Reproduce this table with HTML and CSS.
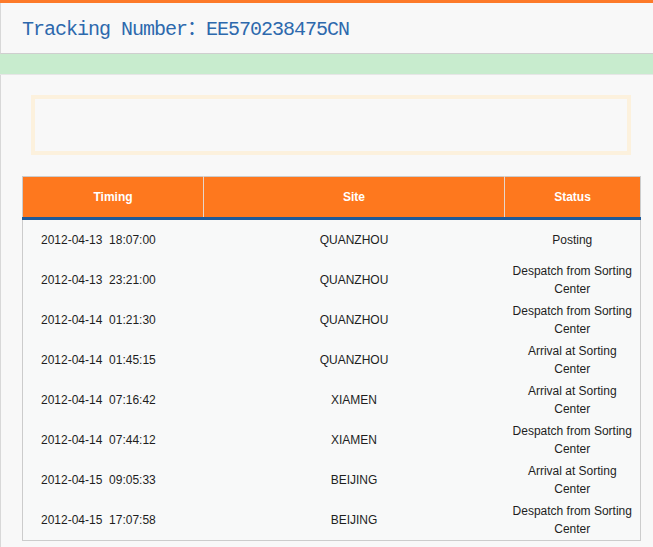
FILE: index.html
```html
<!DOCTYPE html>
<html>
<head>
<meta charset="utf-8">
<link rel="stylesheet" href="styles.css">
</head>
<body>
<div class="topbar"></div>
<div class="header"><h1 class="title">Tracking Number：EE570238475CN</h1></div>
<div class="band"></div>
<div class="main">
  <div class="notice"></div>
  <table class="track">
    <thead>
      <tr><th class="c1">Timing</th><th class="c2">Site</th><th class="c3">Status</th></tr>
    </thead>
    <tbody>
      <tr><td class="time">2012-04-13&nbsp;&nbsp;18:07:00</td><td>QUANZHOU</td><td>Posting</td></tr>
      <tr><td class="time">2012-04-13&nbsp;&nbsp;23:21:00</td><td>QUANZHOU</td><td>Despatch from Sorting Center</td></tr>
      <tr><td class="time">2012-04-14&nbsp;&nbsp;01:21:30</td><td>QUANZHOU</td><td>Despatch from Sorting Center</td></tr>
      <tr><td class="time">2012-04-14&nbsp;&nbsp;01:45:15</td><td>QUANZHOU</td><td>Arrival at Sorting Center</td></tr>
      <tr><td class="time">2012-04-14&nbsp;&nbsp;07:16:42</td><td>XIAMEN</td><td>Arrival at Sorting Center</td></tr>
      <tr><td class="time">2012-04-14&nbsp;&nbsp;07:44:12</td><td>XIAMEN</td><td>Despatch from Sorting Center</td></tr>
      <tr><td class="time">2012-04-15&nbsp;&nbsp;09:05:33</td><td>BEIJING</td><td>Arrival at Sorting Center</td></tr>
      <tr><td class="time">2012-04-15&nbsp;&nbsp;17:07:58</td><td>BEIJING</td><td>Despatch from Sorting Center</td></tr>
    </tbody>
  </table>
</div>
</body>
</html>
```
FILE: styles.css
```css
html, body {
  margin: 0;
  padding: 0;
  background: #f8f8f8;
}
body {
  font-family: "Liberation Sans", Arial, sans-serif;
  color: #1e1e1e;
  font-size: 12px;
}
.topbar {
  height: 3px;
  background: #fd7a2a;
}
.header {
  box-sizing: border-box;
  height: 51px;
  border-left: 1px solid #d8d8d8;
  border-bottom: 1px solid #cfcfcf;
  padding: 0 0 4px 21px;
  display: flex;
  align-items: center;
  background: #f8f8f8;
}
.title {
  margin: 0;
  font-family: "Liberation Mono", "Noto Sans CJK SC", monospace;
  font-weight: normal;
  font-size: 20px;
  letter-spacing: -1px;
  color: #2d69ad;
}
.band {
  height: 20px;
  background: #c8ecce;
  border-bottom: 1px solid #e6e6e6;
}
.main {
  border-left: 1px solid #d8d8d8;
  padding: 20px 0 7px 21px;
}
.notice {
  box-sizing: border-box;
  width: 600px;
  height: 60px;
  margin-left: 9px;
  border: 4px solid #fcf1dd;
  margin-bottom: 21px;
}
.track {
  border-collapse: collapse;
  width: 619px;
  table-layout: fixed;
  border: 1px solid #cccccc;
  background: #f8f9f9;
}
.track th {
  height: 40px;
  padding: 0;
  background: #fe781e;
  color: #fff;
  font-weight: bold;
  font-size: 12px;
  border-bottom: 3px solid #1e5a99;
  border-left: 1px solid #e6d6cc;
}
.track th.c1 { width: 180px; border-left: none; }
.track th.c2 { width: 300px; }
.track td {
  height: 40px;
  padding: 0 4px;
  text-align: center;
  line-height: 18px;
  vertical-align: middle;
}
.track td.time {
  text-align: left;
  padding-left: 18px;
}
```
